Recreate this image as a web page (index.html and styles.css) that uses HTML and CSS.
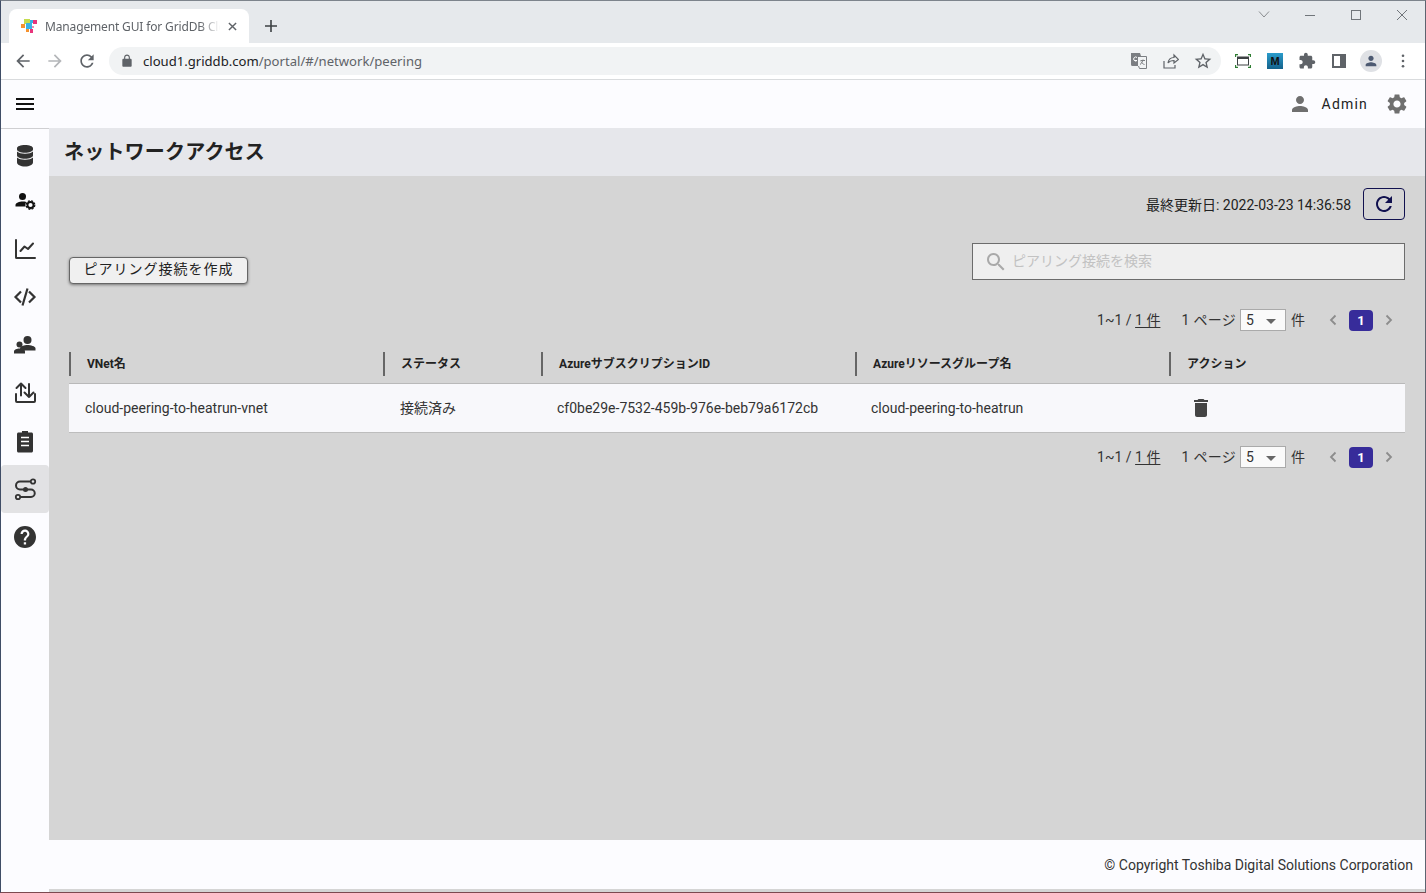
FILE: index.html
```html
<!DOCTYPE html>
<html lang="ja">
<head>
<meta charset="utf-8">
<title>Management GUI for GridDB Cloud</title>
<link rel="stylesheet" href="styles.css">
</head>
<body>
<div class="window">
  <div class="tabstrip">
    <div class="tab">
      <svg class="favicon" viewBox="0 0 16 16"><rect x="3" y="1" width="6" height="5" fill="#c5dc4e"/><rect x="0" y="6" width="4" height="4" fill="#f5922f"/><rect x="5" y="5" width="6" height="6" fill="#39b3e6"/><rect x="12" y="2" width="4" height="4" fill="#e8357c"/><rect x="9" y="2" width="3" height="3" fill="#39b3e6"/><rect x="5" y="11" width="3" height="3" fill="#f5922f"/><rect x="9" y="11" width="3" height="4" fill="#e8357c"/><rect x="11" y="8" width="2" height="2" fill="#e98fb4"/></svg>
      <span class="tab-title">Management GUI for GridDB Cloud</span>
      <svg class="tab-close" viewBox="0 0 10 10"><path d="M1 1l8 8M9 1l-8 8" stroke="#5f6368" stroke-width="1.6" fill="none"/></svg>
    </div>
    <svg class="new-tab" viewBox="0 0 12 12"><path d="M6 0v12M0 6h12" stroke="#3c4043" stroke-width="1.6" fill="none"/></svg>
    <div class="win-controls">
      <svg class="win-btn" viewBox="0 0 46 14"><path d="M18 3.5l5 5.5 5-5.5" stroke="#8a8d90" fill="none"/></svg>
      <svg class="win-btn" viewBox="0 0 46 14"><path d="M18 7.5h10" stroke="#70757a" fill="none"/></svg>
      <svg class="win-btn" viewBox="0 0 46 14"><rect x="18.5" y="2.5" width="9" height="9" stroke="#70757a" fill="none"/></svg>
      <svg class="win-btn" viewBox="0 0 46 14"><path d="M18 2l10 10M28 2l-10 10" stroke="#70757a" fill="none"/></svg>
    </div>
  </div>
  <div class="toolbar">
    <span class="tool"><svg viewBox="0 0 24 24" class="ico20"><path fill="#5f6368" d="M20 11H7.830l5.590-5.590L12 4l-8 8 8 8 1.410-1.410L7.830 13H20v-2z"/></svg></span>
    <span class="tool"><svg viewBox="0 0 24 24" class="ico20"><path fill="#b4b6b9" d="M4 13h12.170l-5.590 5.590L12 20l8-8-8-8-1.410 1.410L16.170 11H4v2z"/></svg></span>
    <span class="tool"><svg viewBox="0 0 24 24" class="ico20"><path fill="#5f6368" d="M17.650 6.350C16.200 4.900 14.210 4 12 4c-4.420 0-7.990 3.580-7.990 8s3.570 8 7.990 8c3.730 0 6.840-2.550 7.730-6h-2.080c-.82 2.330-3.040 4-5.650 4-3.310 0-6-2.690-6-6s2.690-6 6-6c1.660 0 3.140.69 4.220 1.780L13 11h7V4l-2.350 2.350z"/></svg></span>
    <div class="omnibox">
      <svg viewBox="0 0 24 24" class="lock"><path fill="#5f6368" d="M18 8h-1V6c0-2.760-2.240-5-5-5S7 3.240 7 6v2H6c-1.100 0-2 .9-2 2v10c0 1.100.9 2 2 2h12c1.100 0 2-.9 2-2V10c0-1.100-.9-2-2-2zM9 6c0-1.660 1.340-3 3-3s3 1.340 3 3v2H9V6z"/></svg>
      <span class="url"><span class="url-host">cloud1.griddb.com</span>/portal/#/network/peering</span>
      <span class="tool"><svg viewBox="0 0 16 16" class="ico16"><path fill="#7b7e82" d="M0 0h9l1 3h-3v10H1.500A1.500 1.500 0 0 1 0 11.500z"/><path fill="none" stroke="#7b7e82" d="M7 3.500h8.500V15.500H8.500L7.500 13"/><path fill="none" stroke="#fff" d="M6 4.500A2 2 0 1 0 6 7.500H3.500"/><path fill="none" stroke="#7b7e82" d="M9.500 7.500h4.500M12 6.500c-.3 2.500-1.500 4-3 5M10 8.500c.6 1.500 2 2.700 3.500 3"/></svg></span>
      <span class="tool"><svg viewBox="0 0 16 16" class="ico16"><path fill="none" stroke="#5f6368" stroke-width="1.200" d="M1 8v7h11v-3M5 10c.5-3.500 3-5.500 6-5.500V2l4.500 4.500L11 10V7.500C8.500 7.500 6.500 8 5 10z"/></svg></span>
      <span class="tool"><svg viewBox="0 0 24 24" class="ico20"><path fill="#5f6368" d="M22 9.240l-7.190-.62L12 2 9.190 8.630 2 9.240l5.460 4.730L5.820 21 12 17.270 18.180 21l-1.630-7.030L22 9.240zM12 15.400l-3.760 2.270 1-4.280-3.320-2.880 4.380-.38L12 6.100l1.710 4.040 4.380.38-3.320 2.880 1 4.280L12 15.400z"/></svg></span>
    </div>
    <span class="tool tool-first"><svg viewBox="0 0 16 14" class="ico-shot"><path fill="none" stroke="#2e7d32" stroke-width="1.300" d="M0.500 3V.5H3M13 .5h2.500V3M15.500 11v2.500H13M3 13.500H.5V11"/><rect x="2.500" y="3" width="11" height="8" fill="none" stroke="#3c4043"/><rect x="2.500" y="3" width="11" height="2" fill="#3c4043"/></svg></span>
    <span class="tool"><span class="ext-m">M</span></span>
    <span class="tool"><svg viewBox="0 0 24 24" class="ico18"><path fill="#5f6368" d="M20.500 11H19V7c0-1.100-.9-2-2-2h-4V3.500C13 2.120 11.880 1 10.500 1S8 2.120 8 3.500V5H4c-1.100 0-1.990.9-1.990 2v3.800H3.500c1.490 0 2.700 1.210 2.700 2.700s-1.210 2.700-2.700 2.700H2V20c0 1.100.9 2 2 2h3.800v-1.500c0-1.490 1.210-2.700 2.700-2.700 1.490 0 2.700 1.210 2.700 2.700V22H17c1.100 0 2-.9 2-2v-4h1.500c1.380 0 2.500-1.120 2.500-2.500S21.880 11 20.500 11z"/></svg></span>
    <span class="tool"><svg viewBox="0 0 14 14" class="ico14"><rect x="1" y="1" width="12" height="12" fill="none" stroke="#5f6368" stroke-width="2"/><rect x="8" y="1" width="5" height="12" fill="#5f6368"/></svg></span>
    <span class="tool"><span class="avatar"><svg viewBox="0 0 24 24" class="ico16"><path fill="#4d5a72" d="M12 12c2.210 0 4-1.790 4-4s-1.790-4-4-4-4 1.790-4 4 1.790 4 4 4zm0 2c-2.670 0-8 1.340-8 4v2h16v-2c0-2.660-5.330-4-8-4z"/></svg></span></span>
    <span class="tool"><svg viewBox="0 0 4 16" class="ico-dots"><circle cx="2" cy="2" r="1.500" fill="#5f6368"/><circle cx="2" cy="8" r="1.500" fill="#5f6368"/><circle cx="2" cy="14" r="1.500" fill="#5f6368"/></svg></span>
  </div>

  <header class="appbar">
    <svg viewBox="0 0 18 12" class="hamburger"><path d="M0 1h18M0 6h18M0 11h18" stroke="#111" stroke-width="2" fill="none"/></svg>
    <div class="appbar-right">
      <svg viewBox="0 0 24 24" class="ico24"><path fill="#6f6f6f" d="M12 12c2.210 0 4-1.790 4-4s-1.790-4-4-4-4 1.790-4 4 1.790 4 4 4zm0 2c-2.670 0-8 1.340-8 4v2h16v-2c0-2.660-5.330-4-8-4z"/></svg>
      <span class="admin">Admin</span>
      <svg viewBox="0 0 24 24" class="ico24 gear"><path fill="#6f6f6f" d="M19.140 12.940c.04-.3.06-.61.06-.94 0-.32-.02-.64-.07-.94l2.030-1.580c.18-.14.23-.41.12-.61l-1.920-3.320c-.12-.22-.37-.29-.59-.22l-2.390.96c-.5-.38-1.030-.7-1.620-.94l-.36-2.540c-.04-.24-.24-.41-.48-.41h-3.840c-.24 0-.43.17-.47.41l-.36 2.540c-.59.24-1.130.57-1.620.94l-2.390-.96c-.22-.08-.47 0-.59.22L2.740 8.870c-.12.21-.08.47.12.61l2.030 1.580c-.05.3-.09.63-.09.94s.02.64.07.94l-2.030 1.580c-.18.14-.23.41-.12.61l1.920 3.320c.12.22.37.29.59.22l2.390-.96c.5.38 1.030.7 1.620.94l.36 2.540c.05.24.24.41.48.41h3.840c.24 0 .44-.17.47-.41l.36-2.540c.59-.24 1.130-.56 1.620-.94l2.390.96c.22.08.47 0 .59-.22l1.920-3.320c.12-.22.07-.47-.12-.61l-2.010-1.580zM12 15.600c-1.980 0-3.600-1.620-3.600-3.600s1.620-3.600 3.600-3.600 3.600 1.620 3.600 3.600-1.620 3.600-3.600 3.600z"/></svg>
    </div>
  </header>

  <div class="body">
    <nav class="sidebar">
      <div class="nav-item nav-first"><svg viewBox="0 0 24 24" class="ico24"><path fill="#333" d="M12 1c-4.500 0-8 1.300-8 3.200v1.300C4 7.400 7.500 8.700 12 8.700s8-1.300 8-3.200V4.200C20 2.300 16.500 1 12 1zM4 7.600v3.900c0 1.900 3.500 3.200 8 3.200s8-1.300 8-3.200V7.600c-1.700 1.400-4.700 2.200-8 2.200s-6.300-.8-8-2.200zM4 13.600v4.600C4 20.700 7.500 22.500 12 22.500s8-1.800 8-4.300v-4.600c-1.700 1.400-4.700 2.200-8 2.200s-6.300-.8-8-2.200z"/></svg></div>
      <div class="nav-item"><svg viewBox="0 0 24 24" class="ico24"><circle cx="9.500" cy="7.500" r="3.500" fill="#111"/><path fill="#111" d="M9.500 12.500c-3 0-7 1.300-7 3.500v1.500h10.200c-.6-1.800-.3-3.600.6-4.600-1.200-.3-2.500-.4-3.800-.4z"/><circle cx="17.500" cy="16" r="3" fill="none" stroke="#111" stroke-width="1.800"/><circle cx="17.500" cy="16" r="4.300" fill="none" stroke="#111" stroke-width="1.200" stroke-dasharray="2 1.400"/></svg></div>
      <div class="nav-item"><svg viewBox="0 0 24 24" class="ico24"><path fill="none" stroke="#333" stroke-width="2" stroke-linecap="round" stroke-linejoin="round" d="M3 3v17.500c0 .3.200.5.500.5H22M7.500 14l4-4.500 3.500 2.500L20 6.500"/></svg></div>
      <div class="nav-item"><svg viewBox="0 0 24 24" class="ico24"><path fill="none" stroke="#333" stroke-width="2.200" d="M8 6.500L2.500 12 8 17.500M16 6.500l5.500 5.500-5.500 5.500M14.500 3.500l-5 17"/></svg></div>
      <div class="nav-item"><svg viewBox="0 0 24 24" class="ico24"><circle cx="14.500" cy="7" r="4" fill="#333"/><circle cx="6.500" cy="11.500" r="3" fill="#333"/><path fill="#333" d="M14.500 12c-3 0-7.500 1.300-7.500 3.200.9.500 1.700 1.200 2.200 2.300l13.300 0v-2.300c0-1.900-5-3.200-8-3.200zM6.500 15.500c-2.500 0-5.500 1.200-5.500 3v2h11v-2c0-1.800-3-3-5.500-3z"/></svg></div>
      <div class="nav-item"><svg viewBox="0 0 24 24" class="ico24"><path fill="none" stroke="#333" stroke-width="2" stroke-linecap="round" stroke-linejoin="round" d="M3 13v7c0 .6.400 1 1 1h17c.6 0 1-.4 1-1v-7M8 14.500V2.500M3.500 7L8 2.500 12.500 7M16 3v13M11.500 11.500L16 16l4.500-4.500"/></svg></div>
      <div class="nav-item"><svg viewBox="0 0 24 24" class="ico24"><path fill="#333" d="M5.500 3.500h3.500v-1.500h6v1.500h3.500c.8 0 1.500.7 1.500 1.500v17c0 .8-.7 1.500-1.500 1.500h-13c-.8 0-1.500-.7-1.500-1.500v-17c0-.8.7-1.500 1.500-1.500z"/><path stroke="#fff" stroke-width="1.500" d="M8 8.500h8M8 12.500h8M8 16.500h8"/></svg></div>
      <div class="nav-item active"><svg viewBox="0 0 24 24" class="ico24"><path fill="none" stroke="#333" stroke-width="2" d="M18.500 4.500H7a4 4 0 0 0 0 8h11a3.700 3.700 0 0 1 0 7.500H6.500"/><circle cx="20" cy="4.500" r="2.200" fill="#e2e2e4" stroke="#333" stroke-width="1.800"/><circle cx="5" cy="20" r="2.200" fill="#e2e2e4" stroke="#333" stroke-width="1.800"/><circle cx="12.500" cy="12.500" r="2.500" fill="#333"/></svg></div>
      <div class="nav-item"><svg viewBox="0 0 24 24" class="ico24"><path fill="#333" d="M12 1C5.900 1 1 5.900 1 12s4.900 11 11 11 11-4.900 11-11S18.100 1 12 1zm1.100 18.500h-2.300v-2.300h2.300v2.300zm2.300-8.100l-1 1c-.8.8-1.300 1.500-1.300 3.100h-2.300V15c0-1.200.5-2.300 1.300-3.100l1.400-1.400c.4-.4.700-1 .7-1.600 0-1.200-1-2.200-2.200-2.200s-2.200 1-2.200 2.200H7.500c0-2.400 2-4.400 4.400-4.400s4.500 2 4.500 4.400c0 1-.4 1.900-1 2.500z"/></svg></div>
    </nav>

    <div class="main">
      <div class="page-title"><h1>ネットワークアクセス</h1></div>
      <section class="content">
        <div class="updated-row">
          <span class="updated">最終更新日: 2022-03-23 14:36:58</span>
          <button class="refresh"><svg viewBox="0 0 24 24" class="ico24"><path fill="#11114f" d="M17.650 6.350C16.200 4.900 14.210 4 12 4c-4.420 0-7.990 3.580-7.990 8s3.570 8 7.990 8c3.730 0 6.840-2.550 7.730-6h-2.080c-.82 2.330-3.040 4-5.650 4-3.310 0-6-2.690-6-6s2.690-6 6-6c1.660 0 3.140.69 4.220 1.780L13 11h7V4l-2.350 2.350z"/></svg></button>
        </div>
        <div class="action-row">
          <button class="create">ピアリング接続を作成</button>
          <div class="search">
            <svg viewBox="0 0 24 24" class="ico24"><path fill="#a9a9a9" d="M15.500 14h-.79l-.28-.27C15.410 12.590 16 11.110 16 9.500 16 5.910 13.090 3 9.500 3S3 5.910 3 9.500 5.910 16 9.500 16c1.610 0 3.090-.59 4.230-1.570l.27.28v.79l5 4.990L20.490 19l-4.990-5zm-6 0C7.010 14 5 11.990 5 9.500S7.010 5 9.500 5 14 7.010 14 9.500 11.990 14 9.500 14z"/></svg>
            <span class="placeholder">ピアリング接続を検索</span>
          </div>
        </div>
        <div class="pager pager-top">
          <span class="count">1~1 / <u>1 件</u></span>
          <span class="per">1 ページ</span>
          <span class="select">5<i class="caret"></i></span>
          <span class="unit">件</span>
          <svg viewBox="0 0 10 14" class="chev"><path d="M7.500 2.500L3 7l4.500 4.500" stroke="#8c8c8c" stroke-width="1.800" fill="none"/></svg>
          <span class="page-num">1</span>
          <svg viewBox="0 0 10 14" class="chev"><path d="M2.500 2.500L7 7l-4.500 4.500" stroke="#8c8c8c" stroke-width="1.800" fill="none"/></svg>
        </div>
        <div class="table">
          <div class="thead">
            <div class="th">VNet名</div>
            <div class="th">ステータス</div>
            <div class="th">AzureサブスクリプションID</div>
            <div class="th">Azureリソースグループ名</div>
            <div class="th">アクション</div>
          </div>
          <div class="tr">
            <div class="td">cloud-peering-to-heatrun-vnet</div>
            <div class="td td-ja">接続済み</div>
            <div class="td">cf0be29e-7532-459b-976e-beb79a6172cb</div>
            <div class="td">cloud-peering-to-heatrun</div>
            <div class="td"><svg viewBox="0 0 24 24" class="ico24 trash"><path fill="#444" d="M6 19c0 1.100.9 2 2 2h8c1.100 0 2-.9 2-2V7H6v12zM19 4h-3.500l-1-1h-5l-1 1H5v2h14V4z"/></svg></div>
          </div>
        </div>
        <div class="pager pager-bottom">
          <span class="count">1~1 / <u>1 件</u></span>
          <span class="per">1 ページ</span>
          <span class="select">5<i class="caret"></i></span>
          <span class="unit">件</span>
          <svg viewBox="0 0 10 14" class="chev"><path d="M7.500 2.500L3 7l4.500 4.500" stroke="#8c8c8c" stroke-width="1.800" fill="none"/></svg>
          <span class="page-num">1</span>
          <svg viewBox="0 0 10 14" class="chev"><path d="M2.500 2.500L7 7l-4.500 4.500" stroke="#8c8c8c" stroke-width="1.800" fill="none"/></svg>
        </div>
      </section>
      <footer class="footer">© Copyright Toshiba Digital Solutions Corporation</footer>
      <div class="strip"></div>
    </div>
  </div>
</div>
</body>
</html>
```
FILE: styles.css
```css
* { box-sizing: border-box; }
html, body { margin: 0; padding: 0; height: 100%; overflow: hidden; }
body { font-family: Roboto, "Noto Sans CJK JP", sans-serif; color: #222; background: #fff; }
svg { display: block; flex: none; }
button { font-family: inherit; padding: 0; }

.window {
  width: 1426px; height: 893px; display: flex; flex-direction: column;
  border-top: 1px solid #7d848c; border-left: 1px solid #3f4d66;
  border-right: 1px solid #5d6470; border-bottom: 1px solid #7c4a50;
}

/* browser chrome */
.tabstrip { height: 42px; background: #e6e9ec; display: flex; align-items: flex-end; padding-left: 8px; flex: none; }
.tab { width: 240px; height: 34px; background: #fff; border-radius: 8px 8px 0 0; display: flex; align-items: center; padding-left: 12px; }
.favicon { width: 16px; height: 16px; }
.tab-title { font: 12px "Noto Sans", sans-serif; letter-spacing: -.15px; color: #5f6368; margin-left: 8px; width: 175px; white-space: nowrap; overflow: hidden; -webkit-mask-image: linear-gradient(to right, #000 88%, transparent); mask-image: linear-gradient(to right, #000 88%, transparent); }
.tab-close { width: 9px; height: 9px; margin-left: 8px; }
.new-tab { width: 12px; height: 12px; margin: 0 0 11px 16px; }
.win-controls { display: flex; margin-left: auto; align-self: flex-start; margin-top: 7px; }
.win-btn { width: 46px; height: 14px; }

.toolbar { height: 37px; background: #fff; border-bottom: 1px solid #d9dbdd; display: flex; align-items: center; padding: 0 6px 1px 6px; flex: none; }
.tool { width: 32px; height: 28px; display: flex; align-items: center; justify-content: center; flex: none; }
.tool-first { margin-left: 6px; }
.ico20 { width: 20px; height: 20px; }
.ico18 { width: 18px; height: 18px; }
.ico16 { width: 16px; height: 16px; }
.ico14 { width: 14px; height: 14px; }
.ico24 { width: 24px; height: 24px; }
.ico-shot { width: 16px; height: 14px; }
.ico-dots { width: 4px; height: 14px; }
.omnibox { flex: 1; height: 28px; margin-left: 6px; background: #f1f3f4; border-radius: 14px; display: flex; align-items: center; padding: 0 2px 0 11px; }
.lock { width: 14px; height: 14px; }
.url { flex: 1; font: 13.1px "Noto Sans", sans-serif; color: #5f6368; margin-left: 9px; white-space: nowrap; }
.url-host { color: #202124; }
.ext-m { width: 16px; height: 16px; background: linear-gradient(#2a9ccb, #14628c); color: #111; font: bold 11px/16px "Liberation Sans", sans-serif; text-align: center; }
.avatar { width: 22px; height: 22px; border-radius: 50%; background: #dfe1e5; display: flex; align-items: center; justify-content: center; }

/* app header */
.appbar { height: 48px; background: #fcfcff; display: flex; align-items: center; padding: 0 16px 0 15px; flex: none; }
.hamburger { width: 18px; height: 12px; }
.appbar-right { margin-left: auto; display: flex; align-items: center; }
.admin { font-size: 14px; letter-spacing: 1.2px; color: #222; margin-left: 10px; }
.gear { margin-left: 17px; }

.body { flex: 1; display: flex; min-height: 0; }
.sidebar { width: 48px; background: #fcfcff; flex: none; border-top: 1px solid #cfcfd2; }
.nav-item { height: 48px; display: flex; align-items: center; justify-content: center; }
.nav-first { padding-top: 5px; }
.active { background: #e2e2e4; border-radius: 4px; }

.main { flex: 1; display: flex; flex-direction: column; min-width: 0; }
.page-title { height: 48px; background: #e6e7eb; padding: 0 0 4px 15px; display: flex; align-items: center; flex: none; }
h1 { font-size: 20px; font-weight: 700; letter-spacing: .2px; margin: 0; color: #222; }

.content { flex: 1; background: #d5d5d5; padding: 12px 20px 0; }
.updated-row { display: flex; justify-content: flex-end; align-items: center; height: 32px; }
.updated { font-size: 14px; color: #222; margin-right: 12px; }
.refresh { width: 42px; height: 32px; border: 1px solid #11114f; border-radius: 4px; background: transparent; display: flex; align-items: center; justify-content: center; }

.action-row { display: flex; justify-content: space-between; align-items: flex-end; margin-top: 23px; }
.create { width: 179px; height: 27px; padding-bottom: 5px; border: 1px solid #666; border-radius: 4px; background: #f0f0f0; font-size: 14px; letter-spacing: 1px; color: #222; box-shadow: 0 1px 3px rgba(0,0,0,.45); }
.search { width: 433px; height: 37px; border: 1px solid #6c6c6c; background: #efefef; display: flex; align-items: center; padding-left: 11px; margin-bottom: 4px; }
.placeholder { font-size: 14px; color: #c2c2c2; margin-left: 4px; padding-bottom: 4px; }

.pager { display: flex; align-items: center; justify-content: flex-end; height: 22px; padding-right: 11px; font-size: 14px; color: #333; }
.pager-top { margin-top: 25px; }
.pager-bottom { margin-top: 13px; }
.count { padding-bottom: 2px; }
.count u { text-underline-offset: 2px; }
.per { margin-left: 21px; letter-spacing: .3px; padding-bottom: 2px; }
.select { width: 46px; height: 22px; margin-left: 4px; background: #fafafa; border: 1px solid #aaa; padding-left: 5px; line-height: 20px; position: relative; }
.caret { position: absolute; right: 9px; top: 9px; width: 0; height: 0; border: 5px solid transparent; border-top-color: #666; border-bottom: 0; }
.unit { margin-left: 5px; margin-right: 23px; padding-bottom: 2px; }
.chev { width: 10px; height: 14px; }
.page-num { width: 24px; height: 21px; margin: 0 11px; background: #372c9a; color: #fff; font-size: 13px; font-weight: 700; border-radius: 4px; text-align: center; line-height: 21px; }

.table { margin-top: 21px; }
.thead, .tr { display: grid; grid-template-columns: 314px 158px 314px 314px 1fr; }
.th { height: 24px; border-left: 2px solid #666; padding-left: 16px; font-size: 12px; font-weight: 700; line-height: 24px; color: #222; }
.tr { margin-top: 7px; height: 50px; background: #f8f8fb; border-top: 1px solid #b9b9b9; border-bottom: 1px solid #bdbdbd; align-items: center; }
.td { padding-left: 16px; font-size: 14px; color: #333; white-space: nowrap; }
.td-ja { padding-left: 17px; padding-bottom: 2px; }
.trash { margin-left: 4px; }

.footer { height: 49px; flex: none; background: #fcfcff; display: flex; align-items: center; justify-content: flex-end; padding-right: 12px; font-size: 14px; color: #333; }
.strip { height: 3px; flex: none; background: #d5d5d5; }
```
